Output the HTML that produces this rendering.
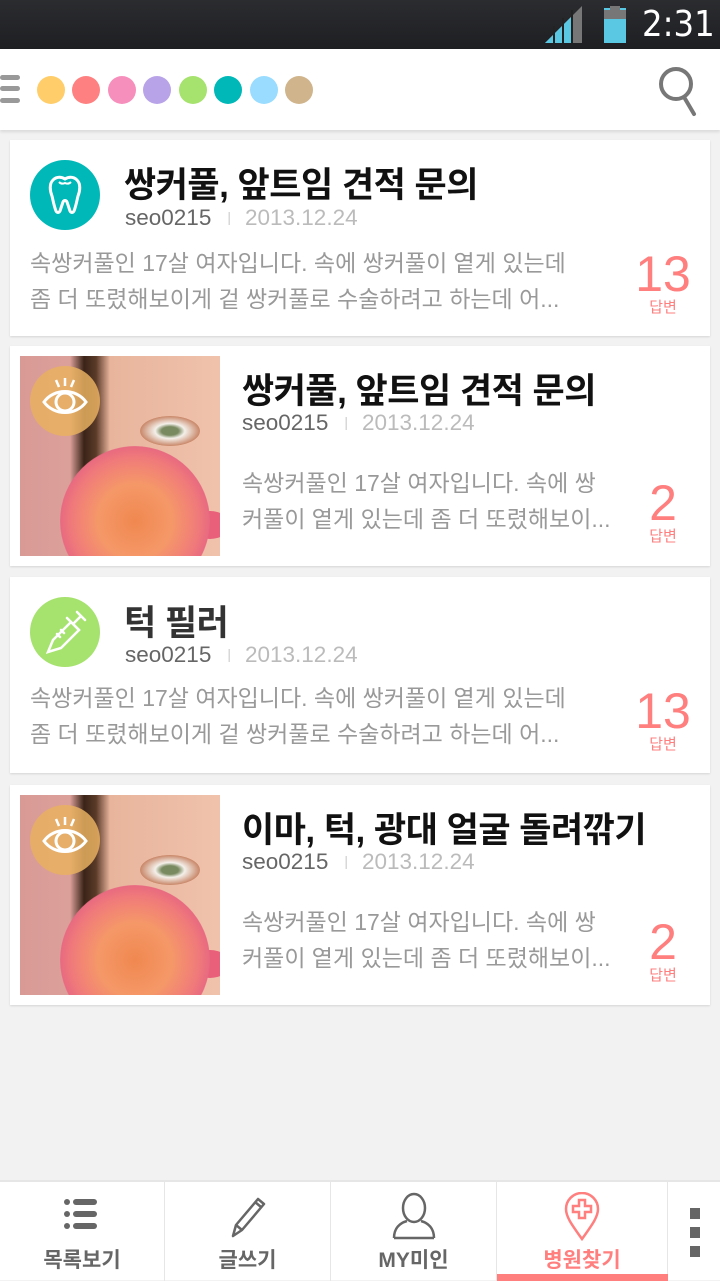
<!DOCTYPE html>
<html><head><meta charset="utf-8"><style>
*{margin:0;padding:0;box-sizing:border-box}
body{width:720px;height:1280px;background:#f2f2f2;position:relative;overflow:hidden;font-family:"Liberation Sans","Noto Sans CJK KR",sans-serif}
.a{position:absolute;white-space:nowrap}
.card{position:absolute;left:10px;width:700px;background:#fff;box-shadow:0 1px 2px rgba(0,0,0,.12)}
.t{font-size:35px;font-weight:bold;color:#111;letter-spacing:-0.5px}
.m{font-size:22.5px;color:#666}
.m span{color:#bbb}
.m i{font-style:normal;color:#ccc;font-size:14px;margin:0 14px 0 16px;vertical-align:3px}
.b{font-size:23px;color:#999;line-height:36px}
.n{color:#ff7f7f;text-align:center;width:70px}
.n b{display:block;font-weight:normal;font-size:50px;line-height:50px}
.n s{display:block;text-decoration:none;font-size:15px;line-height:18px}
.circ{position:absolute;width:70px;height:70px;border-radius:50%}
.photo{position:absolute;width:200px;height:200px;overflow:hidden;background:linear-gradient(90deg,#d99a96 0,#dca09a 25%,#3a2418 32%,#5a3a28 38%,#e8b49c 45%,#f0c2ac 100%)}
.tab{position:absolute;top:0;height:99px;text-align:center;font-size:21px;font-weight:bold;color:#666}
</style></head><body>
<div class="a" style="left:0;top:0;width:720px;height:49px;background:linear-gradient(#2b2c2f,#1e1f22)"></div>
<svg class="a" style="left:545px;top:6px" width="40" height="38"><polygon points="0,37 37,0 37,37" fill="#777"/><polygon points="0,37 28,9 28,37" fill="#5bc8e3"/><rect x="8" y="20" width="2" height="17" fill="#222"/><rect x="17" y="12" width="2" height="25" fill="#222"/><rect x="26" y="4" width="2" height="33" fill="#222"/></svg>
<div class="a" style="left:604px;top:8px;width:22px;height:35px;background:#5bc8e3"></div>
<div class="a" style="left:604px;top:10px;width:22px;height:9px;background:#777"></div>
<div class="a" style="left:610px;top:6px;width:10px;height:4px;background:#777"></div>
<div class="a" style="left:642px;top:4px;font-size:36px;color:#fff;font-family:'DejaVu Sans Condensed','Liberation Sans',sans-serif">2:31</div>
<div class="a" style="left:0;top:49px;width:720px;height:81px;background:#fff;box-shadow:0 2px 3px rgba(0,0,0,.1)"></div>
<div class="a" style="left:0;top:75px;width:20px;height:5px;background:#999;border-radius:3px"></div>
<div class="a" style="left:0;top:86px;width:20px;height:5px;background:#999;border-radius:3px"></div>
<div class="a" style="left:0;top:98px;width:20px;height:5px;background:#999;border-radius:3px"></div>
<div class="a" style="left:37px;top:76px;width:28px;height:28px;border-radius:50%;background:#ffcd69"></div>
<div class="a" style="left:72px;top:76px;width:28px;height:28px;border-radius:50%;background:#ff8080"></div>
<div class="a" style="left:108px;top:76px;width:28px;height:28px;border-radius:50%;background:#f78fbc"></div>
<div class="a" style="left:143px;top:76px;width:28px;height:28px;border-radius:50%;background:#b8a3e8"></div>
<div class="a" style="left:179px;top:76px;width:28px;height:28px;border-radius:50%;background:#a6e26e"></div>
<div class="a" style="left:214px;top:76px;width:28px;height:28px;border-radius:50%;background:#00b8b7"></div>
<div class="a" style="left:250px;top:76px;width:28px;height:28px;border-radius:50%;background:#99dcff"></div>
<div class="a" style="left:285px;top:76px;width:28px;height:28px;border-radius:50%;background:#d0b48c"></div>
<svg class="a" style="left:656px;top:64px" width="44" height="54"><circle cx="20" cy="20" r="15" fill="none" stroke="#777" stroke-width="4"/><line x1="28" y1="33" x2="38" y2="50" stroke="#777" stroke-width="4" stroke-linecap="round"/></svg>

<div class="card" style="top:140px;height:196px"></div>
<div class="circ" style="left:30px;top:160px;background:#00b8b7"></div>
<svg class="a" style="left:30px;top:160px" width="70" height="70"><path d="M23 20c4-4 9-3 12-1 3-2 8-3 12 1 4 4 3 11 1 16-1 4-2 10-4 15-1 2-3 2-4 0l-3-9c-1-2-3-2-4 0l-3 9c-1 2-3 2-4 0-2-5-3-11-4-15-2-5-3-12 1-16z" fill="none" stroke="#fff" stroke-width="3"/><path d="M29 22c2 2 4 2 6 1 2 1 4 1 6-1" fill="none" stroke="#fff" stroke-width="2"/></svg>
<div class="a t" style="left:124px;top:157px">쌍커풀, 앞트임 견적 문의</div>
<div class="a m" style="left:125px;top:205px">seo0215<i>|</i><span>2013.12.24</span></div>
<div class="a b" style="left:30px;top:245px">속쌍커풀인 17살 여자입니다. 속에 쌍커풀이 옅게 있는데<br>좀 더 또렸해보이게 겉 쌍커풀로 수술하려고 하는데 어...</div>
<div class="a n" style="left:628px;top:249px"><b>13</b><s>답변</s></div>

<div class="card" style="top:346px;height:220px"></div>
<div class="photo" style="left:20px;top:356px">
 <div class="a" style="left:120px;top:60px;width:60px;height:30px;border-radius:50%;background:radial-gradient(#7a8a60 20%,#f4f0ea 35%,#c9886a 70%,transparent 72%)"></div>
 <div class="a" style="left:170px;top:155px;width:40px;height:28px;border-radius:50%;background:#e8607a"></div>
 <div class="a" style="left:40px;top:90px;width:150px;height:150px;border-radius:50%;background:radial-gradient(#f08850 0,#f59868 35%,#f07a7a 60%,#e86a80 70%,transparent 72%)"></div>
 <div class="circ" style="left:10px;top:10px;background:rgba(232,176,96,.85)"></div>
 <svg class="a" style="left:10px;top:10px" width="70" height="70"><path d="M14 36c10-14 32-14 42 0-10 14-32 14-42 0z" fill="none" stroke="#fff" stroke-width="3"/><circle cx="35" cy="36" r="9" fill="none" stroke="#fff" stroke-width="3"/><path d="M35 12v8M26 14l3 7M44 14l-3 7" stroke="#fff" stroke-width="2.5"/></svg>
</div>
<div class="a t" style="left:242px;top:363px">쌍커풀, 앞트임 견적 문의</div>
<div class="a m" style="left:242px;top:410px">seo0215<i>|</i><span>2013.12.24</span></div>
<div class="a b" style="left:242px;top:465px">속쌍커풀인 17살 여자입니다. 속에 쌍<br>커풀이 옅게 있는데 좀 더 또렸해보이...</div>
<div class="a n" style="left:628px;top:478px"><b>2</b><s>답변</s></div>

<div class="card" style="top:577px;height:196px"></div>
<div class="circ" style="left:30px;top:597px;background:#a6e26e"></div>
<svg class="a" style="left:30px;top:597px" width="70" height="70"><g fill="none" stroke="#fff" stroke-width="2.5" stroke-linecap="round"><path d="M18 55l5-12 18-18 8 8-18 18z"/><path d="M37 21l12 12M43 27l8-8M47 15l8 8M27 37l3 3M31 33l3 3"/></g></svg>
<div class="a t" style="left:124px;top:595px;color:#333">턱 필러</div>
<div class="a m" style="left:125px;top:642px">seo0215<i>|</i><span>2013.12.24</span></div>
<div class="a b" style="left:30px;top:680px">속쌍커풀인 17살 여자입니다. 속에 쌍커풀이 옅게 있는데<br>좀 더 또렸해보이게 겉 쌍커풀로 수술하려고 하는데 어...</div>
<div class="a n" style="left:628px;top:686px"><b>13</b><s>답변</s></div>

<div class="card" style="top:785px;height:220px"></div>
<div class="photo" style="left:20px;top:795px">
 <div class="a" style="left:120px;top:60px;width:60px;height:30px;border-radius:50%;background:radial-gradient(#7a8a60 20%,#f4f0ea 35%,#c9886a 70%,transparent 72%)"></div>
 <div class="a" style="left:170px;top:155px;width:40px;height:28px;border-radius:50%;background:#e8607a"></div>
 <div class="a" style="left:40px;top:90px;width:150px;height:150px;border-radius:50%;background:radial-gradient(#f08850 0,#f59868 35%,#f07a7a 60%,#e86a80 70%,transparent 72%)"></div>
 <div class="circ" style="left:10px;top:10px;background:rgba(232,176,96,.85)"></div>
 <svg class="a" style="left:10px;top:10px" width="70" height="70"><path d="M14 36c10-14 32-14 42 0-10 14-32 14-42 0z" fill="none" stroke="#fff" stroke-width="3"/><circle cx="35" cy="36" r="9" fill="none" stroke="#fff" stroke-width="3"/><path d="M35 12v8M26 14l3 7M44 14l-3 7" stroke="#fff" stroke-width="2.5"/></svg>
</div>
<div class="a t" style="left:242px;top:802px">이마, 턱, 광대 얼굴 돌려깎기</div>
<div class="a m" style="left:242px;top:849px">seo0215<i>|</i><span>2013.12.24</span></div>
<div class="a b" style="left:242px;top:904px">속쌍커풀인 17살 여자입니다. 속에 쌍<br>커풀이 옅게 있는데 좀 더 또렸해보이...</div>
<div class="a n" style="left:628px;top:917px"><b>2</b><s>답변</s></div>

<div class="a" style="left:0;top:1180px;width:720px;height:100px;background:#fff;border-top:2px solid #e6e6e6">
 <div class="tab" style="left:0;width:165px;border-right:1px solid #e6e6e6"><svg style="margin-top:14px" width="40" height="36"><g fill="#666"><circle cx="5" cy="6" r="3"/><circle cx="5" cy="18" r="3"/><circle cx="5" cy="30" r="3"/><rect x="11" y="3" width="24" height="6" rx="3"/><rect x="11" y="15" width="24" height="6" rx="3"/><rect x="11" y="27" width="24" height="6" rx="3"/></g></svg><div style="margin-top:6px">목록보기</div></div>
 <div class="tab" style="left:165px;width:166px;border-right:1px solid #e6e6e6"><svg style="margin-top:14px" width="40" height="44"><g fill="none" stroke="#666" stroke-width="2.5" stroke-linejoin="round"><path d="M5 40l3-11 22-26 6 5-22 26z"/><path d="M8 29l6 5M27 6l6 5"/></g></svg><div style="margin-top:-2px">글쓰기</div></div>
 <div class="tab" style="left:331px;width:166px;border-right:1px solid #e6e6e6"><svg style="margin-top:10px" width="46" height="48"><g fill="none" stroke="#666" stroke-width="2.5"><ellipse cx="23" cy="16" rx="11" ry="14"/><path d="M3 46c0-10 6-15 13-17M43 46c0-10-6-15-13-17M3 46h40"/></g></svg><div style="margin-top:-2px">MY미인</div></div>
 <div class="tab" style="left:497px;width:171px;color:#ff7f7f;border-right:1px solid #e6e6e6"><svg style="margin-top:10px" width="40" height="50"><path d="M20 47C10 33 4 25 4 17a16 16 0 0 1 32 0c0 8-6 16-16 30z" fill="none" stroke="#ff7f7f" stroke-width="2.5"/><path d="M17 8h6v6h6v6h-6v6h-6v-6h-6v-6h6z" fill="none" stroke="#ff7f7f" stroke-width="2.5"/></svg><div style="margin-top:-4px">병원찾기</div><div style="position:absolute;left:0;bottom:0;width:171px;height:7px;background:#ff7f7f"></div></div>
 <div class="a" style="left:690px;top:26px;width:10px;height:11px;background:#666"></div>
 <div class="a" style="left:690px;top:45px;width:10px;height:11px;background:#666"></div>
 <div class="a" style="left:690px;top:64px;width:10px;height:11px;background:#666"></div>
</div>
</body></html>
